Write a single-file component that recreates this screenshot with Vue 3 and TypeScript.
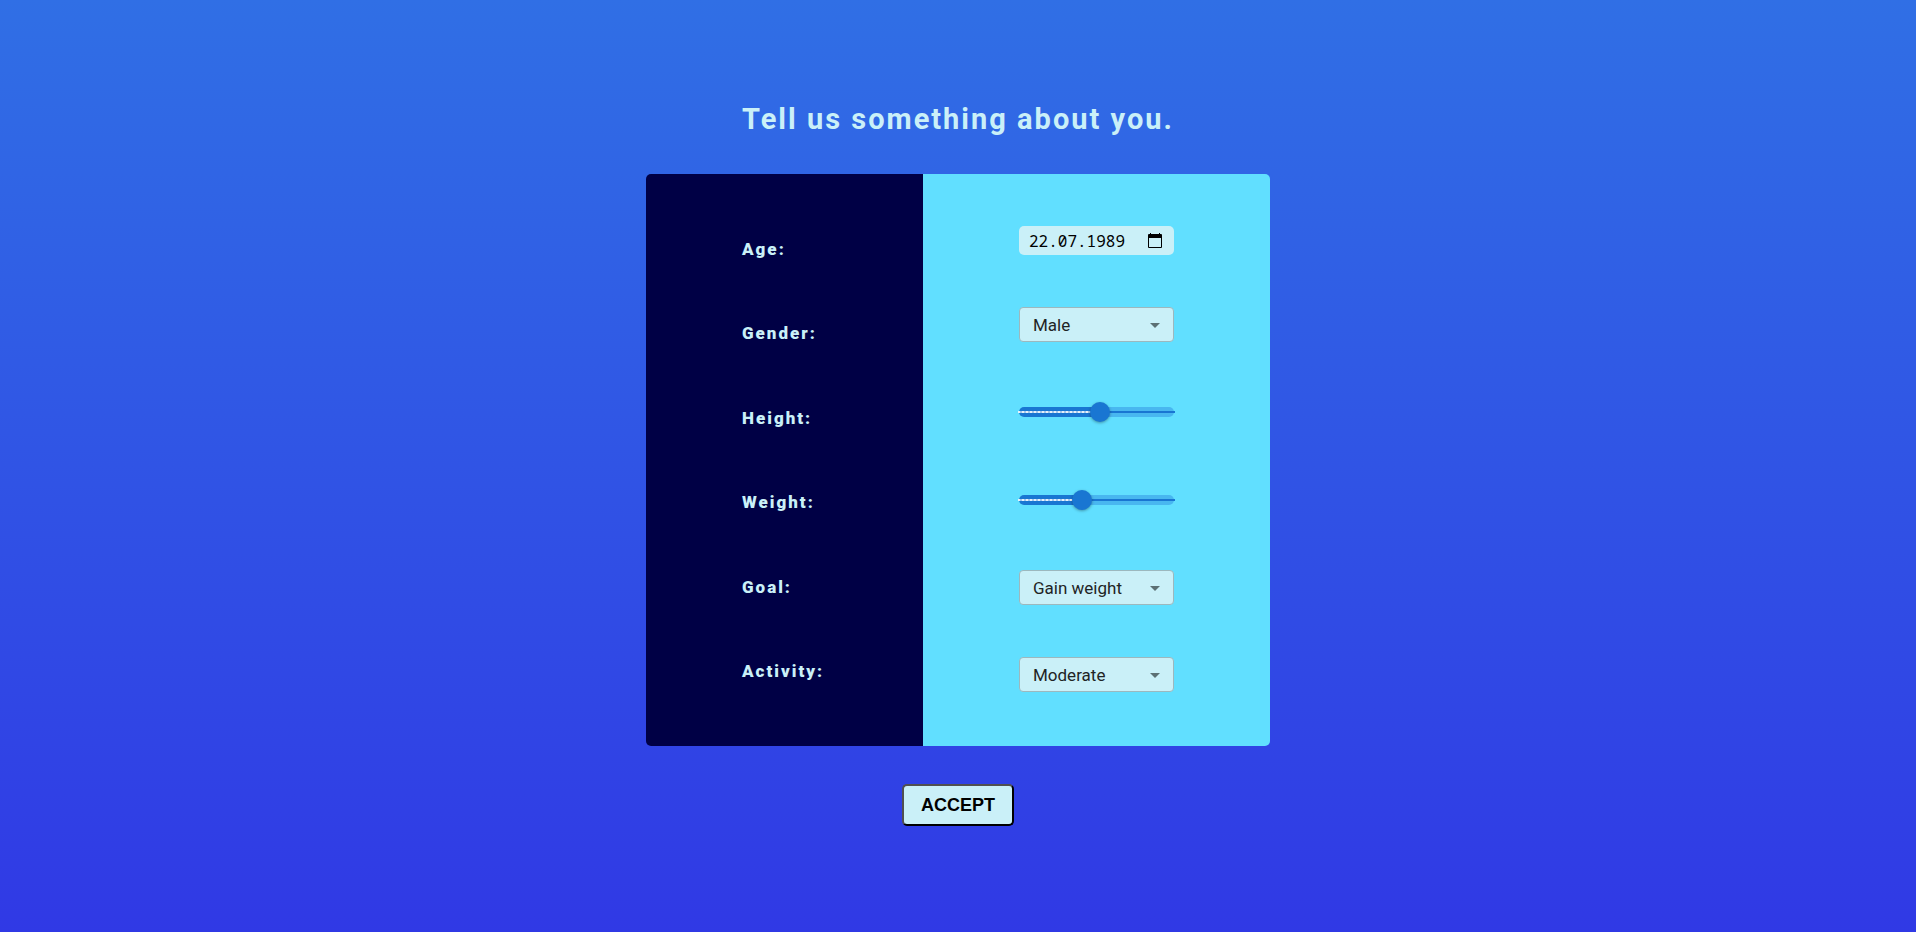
<script setup lang="ts">
import { reactive } from 'vue'

interface Choice {
  id: 'gender' | 'goal' | 'activity'
  kind: 'select'
  label: string
  options: string[]
}

interface Range {
  id: 'height' | 'weight'
  kind: 'range'
  label: string
  min: number
  max: number
}

interface DateField {
  id: 'age'
  kind: 'date'
  label: string
}

type Field = Choice | Range | DateField

const fields: Field[] = [
  { id: 'age', kind: 'date', label: 'Age:' },
  { id: 'gender', kind: 'select', label: 'Gender:', options: ['Male', 'Female'] },
  { id: 'height', kind: 'range', label: 'Height:', min: 0, max: 155 },
  { id: 'weight', kind: 'range', label: 'Weight:', min: 0, max: 155 },
  { id: 'goal', kind: 'select', label: 'Goal:', options: ['Lose weight', 'Keep weight', 'Gain weight'] },
  { id: 'activity', kind: 'select', label: 'Activity:', options: ['Low', 'Moderate', 'High'] },
]

const profile = reactive({
  age: '22.07.1989',
  gender: 'Male',
  height: 81,
  weight: 63,
  goal: 'Gain weight',
  activity: 'Moderate',
})

function fill(field: Range): string {
  return `${((profile[field.id] - field.min) / (field.max - field.min)) * 100}%`
}
</script>

<template>
  <main class="page">
    <h1 class="title">Tell us something about you.</h1>
    <form id="profile" class="card" @submit.prevent>
      <div class="labels">
        <label v-for="field in fields" :key="field.id" :for="field.id" class="label">{{ field.label }}</label>
      </div>
      <div class="controls">
        <template v-for="field in fields" :key="field.id">
          <div v-if="field.kind === 'date'" class="date">
            <input :id="field.id" v-model="profile.age" class="date-input" type="text" size="10" />
            <button class="date-button" type="button" aria-label="Open calendar">
              <svg viewBox="0 0 14 16" width="14" height="16" aria-hidden="true">
                <path d="M2 0h1v1h8V0h1v1h1q1 0 1 1v12q0 1-1 1H1q-1 0-1-1V2q0-1 1-1h1zM1 5v9h12V5z" fill="#000" fill-rule="evenodd" />
              </svg>
            </button>
          </div>
          <div v-else-if="field.kind === 'select'" class="select">
            <select :id="field.id" v-model="profile[field.id]" class="select-input">
              <option v-for="option in field.options" :key="option">{{ option }}</option>
            </select>
            <svg class="arrow" viewBox="0 0 10 5" width="10" height="5" aria-hidden="true">
              <path d="M0 0h10L5 5z" fill="#5b7074" />
            </svg>
          </div>
          <div v-else class="slider" :style="{ '--fill': fill(field) }">
            <input
              :id="field.id"
              v-model.number="profile[field.id]"
              class="slider-input"
              type="range"
              :min="field.min"
              :max="field.max"
            />
          </div>
        </template>
      </div>
    </form>
    <button class="accept" type="submit" form="profile">ACCEPT</button>
  </main>
</template>

<style>
body {
  margin: 0;
}
</style>

<style scoped>
.page {
  box-sizing: border-box;
  min-height: 100vh;
  display: flex;
  flex-direction: column;
  align-items: center;
  justify-content: center;
  gap: 38px;
  padding: 24px 24px 28px;
  background: linear-gradient(#306fe5, #3039e5);
  font-family: Roboto, 'Liberation Sans', sans-serif;
}

.title {
  margin: 0;
  color: #caf0f8;
  font-size: 29px;
  line-height: 34px;
  font-weight: 700;
  letter-spacing: 2px;
}

.card {
  display: flex;
  border-radius: 5px;
  overflow: hidden;
}

.labels,
.controls {
  display: flex;
  flex-direction: column;
  padding: 0 96px;
}

.labels {
  min-width: 85px;
  justify-content: space-evenly;
  background: #000045;
}

.label {
  color: #caf0f8;
  font-size: 17px;
  line-height: 20px;
  font-weight: 900;
  letter-spacing: 2px;
}

.controls {
  gap: 52px;
  padding-block: 52px 54px;
  background: #61dfff;
}

.date {
  box-sizing: border-box;
  display: flex;
  align-items: center;
  justify-content: space-between;
  height: 29px;
  padding: 0 12px 0 10px;
  border-radius: 5px;
  background: #caf0f8;
}

.date-input {
  width: 10ch;
  padding: 0;
  border: 0;
  background: transparent;
  color: #000;
  font-family: 'Noto Sans Mono', 'DejaVu Sans Mono', monospace;
  font-size: 16px;
}

.date-button {
  display: flex;
  padding: 0;
  border: 0;
  background: transparent;
}

.select {
  position: relative;
}

.select-input {
  box-sizing: border-box;
  display: block;
  width: 155px;
  height: 35px;
  padding: 0 32px 0 13px;
  border: 1px solid #9cb8be;
  border-radius: 4px;
  appearance: none;
  background: #caf0f8;
  color: #1f2425;
  font-family: inherit;
  font-size: 17px;
}

.arrow {
  position: absolute;
  top: 16px;
  right: 14px;
  pointer-events: none;
}

.slider {
  position: relative;
  display: flex;
  align-items: center;
  height: 36px;
}

.slider::before {
  content: '';
  position: absolute;
  inset: 13px 0;
  border-radius: 5px;
  background: linear-gradient(90deg, #1976d2 var(--fill), #48b7f0 var(--fill));
}

.slider::after {
  content: '';
  position: absolute;
  inset: 17px -1px;
  background:
    linear-gradient(90deg, transparent var(--fill), #1976d2 var(--fill)),
    repeating-linear-gradient(90deg, #e8f1fa 0 2px, #a3c8ed 2px 4px);
}

.slider-input {
  position: relative;
  z-index: 1;
  flex: 1;
  height: 20px;
  margin: 0 -10px;
  appearance: none;
  background: transparent;
}

.slider-input::-webkit-slider-thumb {
  appearance: none;
  width: 20px;
  height: 20px;
  border-radius: 50%;
  background: #1976d2;
  box-shadow: 0 1px 3px rgba(0, 0, 0, 0.35);
}

.accept {
  padding: 8px 17px;
  border: 2px solid;
  border-color: #505050 #000 #000 #505050;
  border-radius: 5px;
  background: #caf0f8;
  color: #000;
  font-family: 'Liberation Sans', Arial, sans-serif;
  font-size: 18px;
  line-height: 22px;
  font-weight: 700;
}
</style>
